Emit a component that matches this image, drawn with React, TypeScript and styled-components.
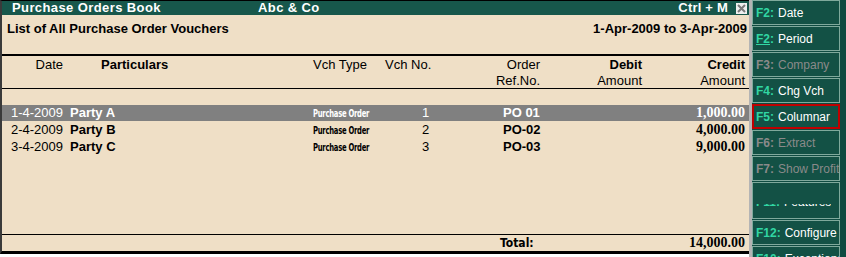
import React from 'react';
import styled, { createGlobalStyle } from 'styled-components';

const GlobalStyle = createGlobalStyle`
  html, body {
    margin: 0;
    padding: 0;
    background: #ffffff;
  }
  body {
    font-family: "Liberation Sans", Arial, sans-serif;
  }
`;

const Screen = styled.div`
  display: flex;
  width: 846px;
  height: 257px;
  overflow: hidden;
`;

const Main = styled.div`
  width: 747px;
  height: 250px;
  display: flex;
  flex-direction: column;
  background: #efdfc6;
  border-left: 2px solid #3a3a3a;
  border-top: 1px solid #000;
  border-bottom: 3px solid #000;
  color: #000;
`;

const TitleBar = styled.div`
  height: 14px;
  background: #17574b;
  color: #fff;
  display: flex;
  align-items: center;
  font-size: 13px;
  font-weight: bold;
  letter-spacing: 0.4px;
  line-height: 14px;
`;

const TitleText = styled.span<{ w: number; pl?: number }>`
  width: ${p => p.w}px;
  padding-left: ${p => p.pl || 0}px;
  box-sizing: border-box;
  flex: none;
`;

const Shortcut = styled.span`
  margin-left: auto;
  letter-spacing: 0.2px;
`;

const CloseBox = styled.span`
  width: 11px;
  height: 11px;
  margin: 0 2px 0 8px;
  background: #f0f0f0;
  display: flex;
  align-items: center;
  justify-content: center;
`;

const InfoRow = styled.div`
  height: 41px;
  display: flex;
  justify-content: space-between;
  padding: 6px 2px 0 5px;
  box-sizing: border-box;
  font-size: 13px;
  font-weight: bold;
  line-height: 15px;
  border-bottom: 2px solid #000;
`;

const Cols = `
  display: grid;
  grid-template-columns: 62px 249px 72px 75px 85px 100px 102px;
`;

const HeadGrid = styled.div`
  ${Cols}
  height: 33px;
  padding-top: 1px;
  box-sizing: border-box;
  font-size: 13px;
  line-height: 16px;
  border-bottom: 1px solid #000;
`;

const HeadCell = styled.div<{ align?: string; bold?: boolean; pl?: number; pr?: number }>`
  text-align: ${p => p.align || 'left'};
  font-weight: ${p => (p.bold ? 'bold' : 'normal')};
  padding-left: ${p => p.pl || 0}px;
  padding-right: ${p => p.pr || 0}px;
  white-space: nowrap;
`;

const Body = styled.div`
  flex: 1;
  padding-top: 16px;
`;

const Row = styled.div<{ selected?: boolean }>`
  ${Cols}
  height: 16px;
  margin-bottom: 1px;
  align-items: center;
  font-size: 13px;
  line-height: 16px;
  background: ${p => (p.selected ? '#808080' : 'transparent')};
  color: ${p => (p.selected ? '#ffffff' : '#000000')};
`;

const Cell = styled.div<{ align?: string; bold?: boolean; pl?: number; pr?: number }>`
  text-align: ${p => p.align || 'left'};
  font-weight: ${p => (p.bold ? 'bold' : 'normal')};
  padding-left: ${p => p.pl || 0}px;
  padding-right: ${p => p.pr || 0}px;
  white-space: nowrap;
  overflow: hidden;
`;

const VchType = styled.span`
  display: inline-block;
  font-family: "DejaVu Sans", sans-serif;
  font-weight: bold;
  font-size: 10.5px;
  letter-spacing: -0.4px;
  transform: scaleX(0.65);
  transform-origin: left center;
`;

const Amount = styled.div`
  text-align: right;
  padding-right: 2px;
  font-family: "Liberation Serif", serif;
  font-weight: bold;
  font-size: 14px;
`;

const TotalRow = styled.div`
  ${Cols}
  height: 16px;
  border-top: 1px solid #000;
  align-items: center;
  font-size: 13px;
`;

const TotalLabel = styled.div`
  grid-column: 5;
  padding-left: 40px;
  font-family: "DejaVu Sans", sans-serif;
  font-weight: bold;
  font-size: 12px;
  font-stretch: condensed;
  white-space: nowrap;
`;

const Sidebar = styled.div`
  width: 97px;
  height: 257px;
  background: #0f4b41;
  border-left: 3px solid #b4b4b4;
  box-sizing: border-box;
  display: flex;
  flex-direction: column;
  gap: 1px;
  padding-right: 6px;
  font-size: 12px;
`;

const Button = styled.div<{ h?: number; active?: boolean }>`
  height: ${p => p.h || 25}px;
  flex: none;
  box-sizing: border-box;
  background: #135145;
  border: ${p => (p.active ? '2px solid #c00000' : '1px solid #7fa99c')};
  display: flex;
  align-items: center;
  padding-left: ${p => (p.active ? 2 : 3)}px;
  white-space: nowrap;
  overflow: hidden;
  color: #ffffff;
`;

const Key = styled.span<{ disabled?: boolean; underline?: boolean; tight?: boolean }>`
  font-weight: bold;
  color: ${p => (p.disabled ? '#8a8a8a' : '#31d6a3')};
  text-decoration: ${p => (p.underline ? 'underline' : 'none')};
  margin-right: ${p => (p.tight ? 0 : 4)}px;
`;

const Label = styled.span<{ disabled?: boolean }>`
  color: ${p => (p.disabled ? '#8a8a8a' : '#ffffff')};
`;

const Clipped = styled.div`
  align-self: flex-end;
  height: 6px;
  margin-bottom: 8px;
  overflow: hidden;
  display: flex;
  align-items: flex-end;
  line-height: 15px;
`;

const rows = [
  { date: '1-4-2009', party: 'Party A', no: '1', ref: 'PO 01', amt: '1,000.00' },
  { date: '2-4-2009', party: 'Party B', no: '2', ref: 'PO-02', amt: '4,000.00' },
  { date: '3-4-2009', party: 'Party C', no: '3', ref: 'PO-03', amt: '9,000.00' },
];

type Btn = { k: string; l: string; disabled?: boolean; underline?: boolean; active?: boolean };

const buttons: Btn[] = [
  { k: 'F2:', l: 'Date' },
  { k: 'F2', l: 'Period', underline: true },
  { k: 'F3:', l: 'Company', disabled: true },
  { k: 'F4:', l: 'Chg Vch' },
  { k: 'F5:', l: 'Columnar', active: true },
  { k: 'F6:', l: 'Extract', disabled: true },
  { k: 'F7:', l: 'Show Profit', disabled: true },
];

export default function App() {
  return (
    <>
      <GlobalStyle />
      <Screen>
        <Main>
          <TitleBar>
            <TitleText w={256} pl={10}>Purchase Orders Book</TitleText>
            <TitleText w={100}>Abc &amp; Co</TitleText>
            <Shortcut>Ctrl + M</Shortcut>
            <CloseBox>
              <svg width="9" height="9" viewBox="0 0 9 9">
                <path d="M1 1 L8 8 M8 1 L1 8" stroke="#7a7a7a" strokeWidth="2" />
              </svg>
            </CloseBox>
          </TitleBar>
          <InfoRow>
            <span>List of All Purchase Order Vouchers</span>
            <span>1-Apr-2009 to 3-Apr-2009</span>
          </InfoRow>
          <HeadGrid>
            <HeadCell align="right" pr={1}>Date</HeadCell>
            <HeadCell bold pl={37}>Particulars</HeadCell>
            <HeadCell>Vch Type</HeadCell>
            <HeadCell>Vch No.</HeadCell>
            <HeadCell align="right" pr={5}>Order<br />Ref.No.</HeadCell>
            <HeadCell align="right" pr={3}><b>Debit</b><br />Amount</HeadCell>
            <HeadCell align="right" pr={2}><b>Credit</b><br />Amount</HeadCell>
          </HeadGrid>
          <Body>
            {rows.map((r, i) => (
              <Row key={i} selected={i === 0}>
                <Cell align="right" pr={1}>{r.date}</Cell>
                <Cell bold pl={6}>{r.party}</Cell>
                <Cell><VchType>Purchase Order</VchType></Cell>
                <Cell pl={37}>{r.no}</Cell>
                <Cell bold pl={43}>{r.ref}</Cell>
                <Cell />
                <Amount>{r.amt}</Amount>
              </Row>
            ))}
          </Body>
          <TotalRow>
            <TotalLabel>Total:</TotalLabel>
            <Cell />
            <Amount style={{ gridColumn: 7 }}>14,000.00</Amount>
          </TotalRow>
        </Main>
        <Sidebar>
          {buttons.map(b => (
            <Button key={b.l} active={b.active}>
              <Key disabled={b.disabled} underline={b.underline} tight={b.underline}>{b.k}</Key>
              {b.underline && <Key>:</Key>}
              <Label disabled={b.disabled}>{b.l}</Label>
            </Button>
          ))}
          <Button h={37}>
            <Clipped>
              <Key>F11:</Key>
              <Label>Features</Label>
            </Clipped>
          </Button>
          <Button>
            <Key>F12:</Key>
            <Label>Configure</Label>
          </Button>
          <Button>
            <Key>F10:</Key>
            <Label>Exceptions</Label>
          </Button>
        </Sidebar>
      </Screen>
    </>
  );
}
